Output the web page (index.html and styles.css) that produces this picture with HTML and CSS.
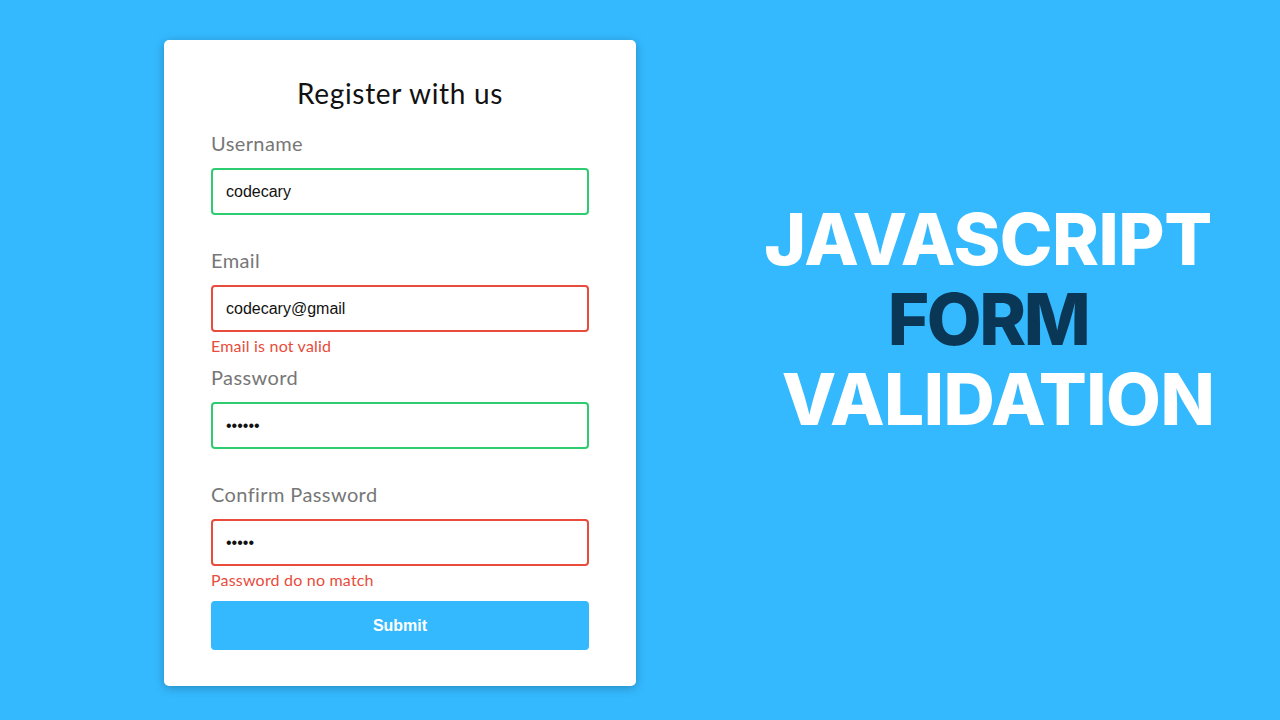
FILE: index.html
```html
<!DOCTYPE html>
<html lang="en">
<head>
<meta charset="utf-8">
<title>JavaScript Form Validation</title>
<link rel="stylesheet" href="styles.css">
</head>
<body>
<main class="stage">
  <form class="card" onsubmit="return false">
    <h2 class="title">Register with us</h2>
    <div class="field success">
      <label class="label" for="username">Username</label>
      <input class="input" id="username" type="text" value="codecary">
      <small class="msg"></small>
    </div>
    <div class="field error">
      <label class="label" for="email">Email</label>
      <input class="input" id="email" type="text" value="codecary@gmail">
      <small class="msg">Email is not valid</small>
    </div>
    <div class="field success">
      <label class="label" for="password">Password</label>
      <input class="input" id="password" type="password" value="123456">
      <small class="msg"></small>
    </div>
    <div class="field error">
      <label class="label" for="password2">Confirm Password</label>
      <input class="input" id="password2" type="password" value="12345">
      <small class="msg">Password do no match</small>
    </div>
    <button class="submit" type="submit">Submit</button>
  </form>
  <div class="headline">
    <div class="line light">JAVASCRIPT</div>
    <div class="line dark tight">FORM</div>
    <div class="line light shift">VALIDATION</div>
  </div>
</main>
</body>
</html>
```
FILE: styles.css
```css
* { box-sizing: border-box; }
html, body { margin: 0; padding: 0; }
body {
  background: #34b9fe;
  width: 1280px;
  height: 720px;
  overflow: hidden;
  font-family: "Lato", "Open Sans", sans-serif;
}
.stage {
  display: flex;
  align-items: flex-start;
  padding: 40px 0 0 164px;
  height: 720px;
}
.card {
  width: 472px;
  height: 646px;
  background: #fff;
  border-radius: 5px;
  box-shadow: 0 2px 10px rgba(0, 0, 0, 0.25);
  padding: 37px 47px 36px;
  display: flex;
  flex-direction: column;
}
.title {
  margin: 0 0 22px;
  text-align: center;
  font-size: 28px;
  line-height: 32px;
  font-weight: 400;
  color: #111;
  letter-spacing: 0.7px;
}
.field {
  display: flex;
  flex-direction: column;
  flex-shrink: 0;
  margin-bottom: 10px;
}
.label {
  font-size: 20px;
  line-height: 24px;
  color: #777;
  letter-spacing: 0.4px;
  margin-bottom: 13px;
}
.input {
  display: block;
  width: 100%;
  height: 47px;
  border: 2px solid #f0f0f0;
  border-radius: 4px;
  padding: 1px 13px 0;
  font-family: "Liberation Sans", Arial, sans-serif;
  font-size: 16px;
  color: #111;
  outline: none;
}
.success .input { border-color: #2ecc71; }
.error .input { border-color: #e74c3c; }
.msg {
  display: block;
  height: 20px;
  margin-top: 3px;
  padding-top: 1px;
  font-size: 16px;
  line-height: 20px;
  letter-spacing: 0.2px;
  color: #e74c3c;
}
.submit {
  flex-shrink: 0;
  margin-top: 2px;
  height: 49px;
  width: 100%;
  border: none;
  border-radius: 4px;
  background: #34b9fe;
  color: #fff;
  font-family: "Liberation Sans", Arial, sans-serif;
  font-weight: 700;
  font-size: 16px;
}
.headline {
  margin-left: 129px;
  width: 446px;
  padding-top: 159px;
  display: flex;
  flex-direction: column;
  align-items: center;
  font-family: "Inter", sans-serif;
  font-weight: 800;
  font-size: 71px;
  line-height: 80px;
  letter-spacing: -0.5px;
}
.line { white-space: nowrap; }
.light { color: #fff; }
.dark { color: #0b3756; }
.tight { letter-spacing: -2.5px; }
.shift { margin-left: 20px; }
```
